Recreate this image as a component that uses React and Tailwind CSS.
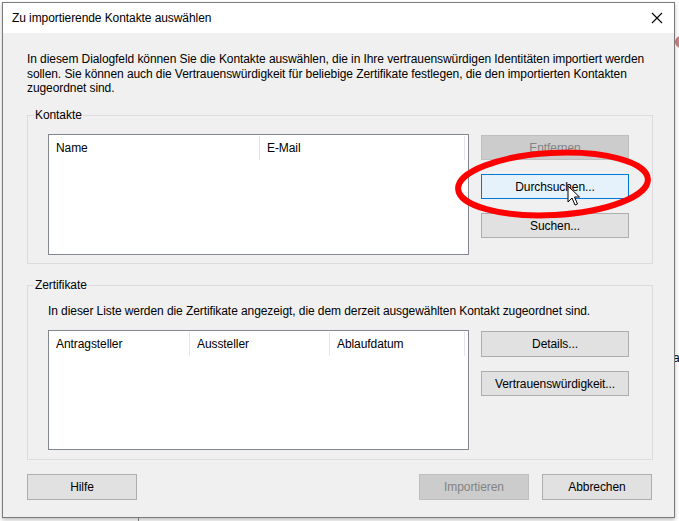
import React from "react";

const font = { fontFamily: '"Liberation Sans", Arial, sans-serif' };

function Btn({ children, w = "w-[148px]", variant = "normal", h = "h-[25px]" }) {
  const styles = {
    normal: "bg-[#e1e1e1] border-[#adadad] text-black",
    disabled: "bg-[#cccccc] border-[#bfbfbf] text-[#838383]",
    hover: "bg-[#e5f1fb] border-[#0078d7] text-black",
  };
  return (
    <div
      className={`${w} ${h} border ${styles[variant]} flex items-center justify-center text-[12px] leading-none`}
    >
      {children}
    </div>
  );
}

function ListBox({ cols, h }) {
  return (
    <div className={`w-[421px] ${h} border border-[#828790] bg-white flex flex-col`}>
      <div className="flex h-[25px] items-center">
        {cols.map((c, i) => (
          <div key={i} className={`${c.w} h-[25px] flex items-center`}>
            <div className="flex-1 pl-[7px] text-[12px]">{c.label}</div>
            {c.sep && <div className="w-px h-[24px] bg-[#e5e5e5] self-start mt-[1px]" />}
          </div>
        ))}
      </div>
    </div>
  );
}

export default function App() {
  return (
    <div className="w-[679px] h-[521px] bg-white relative overflow-hidden text-black tracking-[-0.08px]" style={font}>
      {/* outside bits */}
      <div className="absolute left-[138px] top-[518px] w-px h-[4px] bg-[#8a8a8a]" />
      <div className="absolute left-[675px] top-[36px] w-[12px] h-[12px] rounded-full bg-[#c98080]" />
      <div className="absolute left-[673px] top-[352px] text-[12px] leading-none">a</div>

      <div className="pl-[2px] pt-[2px]">
        <div className="w-[673px] h-[516px] border border-[#7a7a7a] bg-[#f0f0f0] flex flex-col shadow-[0_2px_4px_rgba(0,0,0,0.25)] relative">
          {/* title bar */}
          <div className="h-[30px] bg-white flex items-center justify-between pl-[9px] pr-[10px] shrink-0">
            <span className="text-[12px]">Zu importierende Kontakte auswählen</span>
            <svg width="12" height="12" viewBox="0 0 12 12" className="mr-[1px]">
              <path d="M1 1 L11 11 M11 1 L1 11" stroke="#000" strokeWidth="1.1" fill="none" />
            </svg>
          </div>

          {/* body */}
          <div className="flex flex-col pl-[24px] pr-[21px] pt-[19px]">
            <div className="h-[44px] text-[12px] leading-[14.5px] whitespace-nowrap">
              <div>In diesem Dialogfeld können Sie die Kontakte auswählen, die in Ihre vertrauenswürdigen Identitäten importiert werden</div>
              <div>sollen. Sie können auch die Vertrauenswürdigkeit für beliebige Zertifikate festlegen, die den importierten Kontakten</div>
              <div>zugeordnet sind.</div>
            </div>

            {/* Kontakte group */}
            <div className="mt-[19px] w-[626px] h-[149px] border border-[#dcdcdc] relative flex gap-[12px] pl-[20px] pt-[18px]">
              <span className="absolute left-[6px] top-[-9px] px-[1px] bg-[#f0f0f0] text-[12px] leading-[16px]">Kontakte</span>
              <ListBox
                h="h-[121px]"
                cols={[
                  { label: "Name", w: "w-[211px]", sep: true },
                  { label: "E-Mail", w: "w-[205px]", sep: true },
                ]}
              />
              <div className="flex flex-col gap-[14px] mt-[1px]">
                <Btn variant="disabled">Entfernen</Btn>
                <Btn variant="hover">Durchsuchen...</Btn>
                <Btn>Suchen...</Btn>
              </div>
            </div>

            {/* Zertifikate group */}
            <div className="mt-[21px] w-[626px] h-[175px] border border-[#dcdcdc] relative flex flex-col pl-[20px] pt-[18px]">
              <span className="absolute left-[6px] top-[-9px] px-[1px] bg-[#f0f0f0] text-[12px] leading-[16px]">Zertifikate</span>
              <div className="text-[12px] leading-[14px] whitespace-nowrap">
                In dieser Liste werden die Zertifikate angezeigt, die dem derzeit ausgewählten Kontakt zugeordnet sind.
              </div>
              <div className="flex gap-[12px] mt-[12px]">
                <ListBox
                  h="h-[120px]"
                  cols={[
                    { label: "Antragsteller", w: "w-[141px]", sep: true },
                    { label: "Aussteller", w: "w-[140px]", sep: true },
                    { label: "Ablaufdatum", w: "w-[135px]", sep: true },
                  ]}
                />
                <div className="flex flex-col gap-[14px] mt-[1px]">
                  <Btn h="h-[26px]">Details...</Btn>
                  <Btn>Vertrauenswürdigkeit...</Btn>
                </div>
              </div>
            </div>

            {/* bottom buttons */}
            <div className="mt-[14px] flex items-center w-[625px]">
              <Btn w="w-[110px]" h="h-[26px]">Hilfe</Btn>
              <div className="flex-1" />
              <Btn w="w-[110px]" h="h-[26px]" variant="disabled">Importieren</Btn>
              <div className="w-[13px]" />
              <Btn w="w-[110px]" h="h-[26px]">Abbrechen</Btn>
            </div>
          </div>
        </div>
      </div>

      {/* red annotation ellipse */}
      <svg className="absolute left-0 top-0 pointer-events-none" width="679" height="521">
        <ellipse cx="553" cy="184" rx="95" ry="31" fill="none" stroke="#ff0000" strokeWidth="6" transform="rotate(-3 553 184)" />
      </svg>

      {/* cursor */}
      <svg className="absolute left-[567px] top-[185px] pointer-events-none" width="14" height="22" viewBox="0 0 14 22">
        <path d="M1 1 L1 17 L5 13 L8 20 L10.5 19 L7.5 12 L12.5 12 Z" fill="#fff" stroke="#000" strokeWidth="1" strokeLinejoin="miter" />
      </svg>
    </div>
  );
}
